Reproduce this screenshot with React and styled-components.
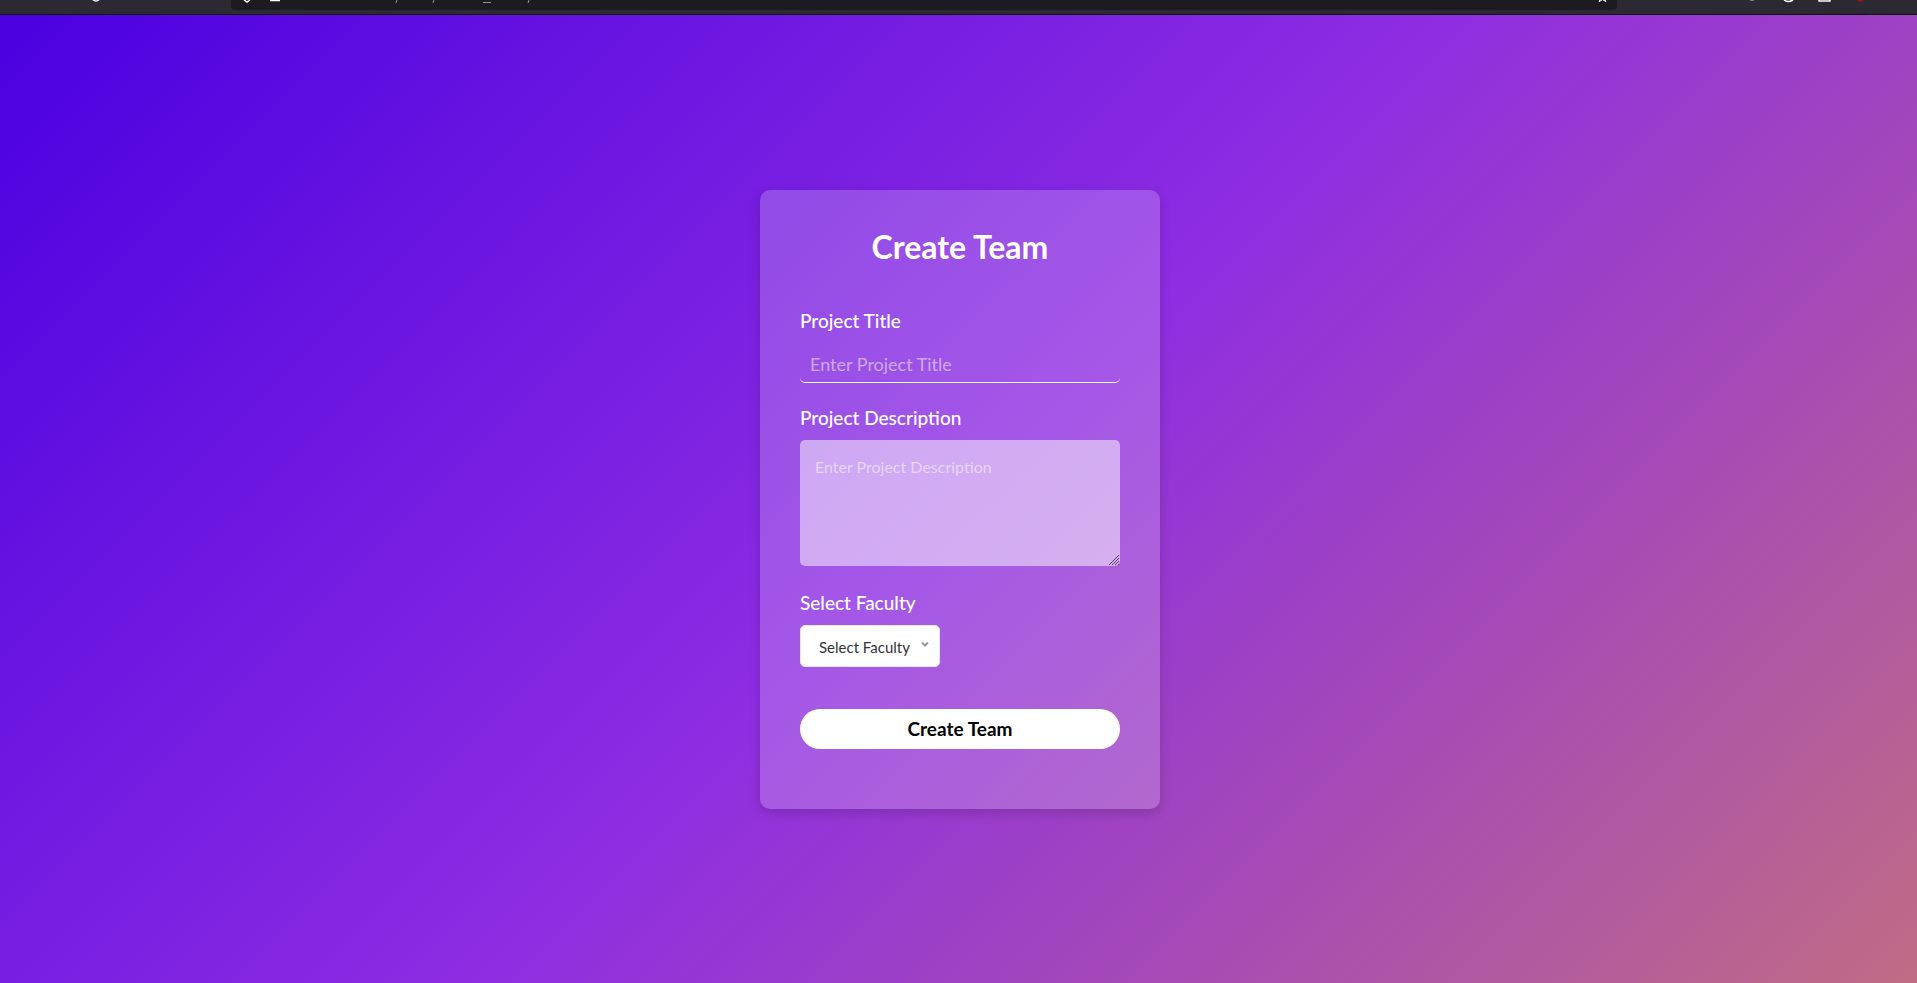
import React from "react";
import styled, { createGlobalStyle } from "styled-components";

const GlobalStyle = createGlobalStyle`
  * { box-sizing: border-box; }
  body { margin: 0; font-family: Lato, "Open Sans", sans-serif; }
`;

const Page = styled.div`
  display: flex;
  flex-direction: column;
  min-height: 100vh;
`;

const BrowserBar = styled.header`
  display: flex;
  align-items: flex-start;
  height: 15px;
  padding: 0 300px 0 231px;
  overflow: hidden;
  background: #2b2a33;
  border-bottom: 1px solid #0c0c0d;
  position: relative;
`;

const AddressField = styled.div`
  flex: 1;
  height: 10px;
  border-radius: 0 0 4px 4px;
  background: #1c1b22;
`;

const BarMarks = styled.svg`
  position: absolute;
  top: 0;
  left: ${(p) => (p.$end ? "auto" : "0")};
  right: ${(p) => (p.$end ? "0" : "auto")};
`;

const Stage = styled.main`
  flex: 1;
  display: flex;
  align-items: center;
  justify-content: center;
  padding: 20px 20px 20px 23px;
  background: linear-gradient(135deg, #4a00e0, #8e2de2, #c06c84);
`;

const Card = styled.form`
  width: 100%;
  max-width: 400px;
  padding: 40px 40px 60px;
  border-radius: 10px;
  background: rgba(255, 255, 255, 0.2);
  box-shadow: 0 4px 12px rgba(0, 0, 0, 0.16);
`;

const Title = styled.h1`
  margin: 0 0 42px;
  color: #fff;
  font-size: 32px;
  font-weight: 700;
  line-height: 34px;
  text-align: center;
`;

const Field = styled.div`
  display: flex;
  flex-direction: column;
  align-items: stretch;
  gap: 8px;
  margin-bottom: 20px;
`;

const Label = styled.label`
  color: #fff;
  font-size: 19px;
  font-weight: 500;
  line-height: 29px;
`;

const TextInput = styled.input`
  height: 40px;
  padding: 12px 10px 8px;
  border: 0;
  border-bottom: 1px solid #fff;
  border-radius: 5px;
  outline: 0;
  background: transparent;
  color: #fff;
  font: 18px Lato, sans-serif;
  &::placeholder { color: rgba(255, 255, 255, 0.5); }
`;

const AreaWrap = styled.div`
  position: relative;
  padding-bottom: 2px;
`;

const TextArea = styled.textarea`
  display: block;
  width: 100%;
  height: 126px;
  padding: 15px;
  border: 0;
  border-radius: 5px;
  outline: 0;
  background: rgba(255, 255, 255, 0.5);
  color: #fff;
  font: 16px/24px Lato, sans-serif;
  resize: vertical;
  &::placeholder { color: rgba(255, 255, 255, 0.5); }
  &::-webkit-resizer { background: transparent; }
`;

const Grip = styled.svg`
  position: absolute;
  right: 1px;
  bottom: 3px;
  pointer-events: none;
`;

const SelectWrap = styled.div`
  position: relative;
  width: 140px;
`;

const Select = styled.select`
  display: block;
  width: 100%;
  height: 42px;
  padding: 2px 28px 0 18px;
  appearance: none;
  border: 1px solid #e8e8e8;
  border-radius: 5px;
  background: #fff;
  color: #333;
  font: 15px Lato, sans-serif;
`;

const Chevron = styled.svg`
  position: absolute;
  right: 11px;
  top: 16px;
  pointer-events: none;
`;

const SubmitButton = styled.button`
  display: block;
  width: 100%;
  height: 40px;
  margin-top: 42px;
  padding: 0;
  border: 0;
  border-radius: 20px;
  background: #fff;
  color: #000;
  font: 700 19px Lato, sans-serif;
  cursor: pointer;
`;

export default function App() {
  return (
    <Page>
      <GlobalStyle />
      <BrowserBar>
        <BarMarks width="560" height="10" aria-hidden="true">
          <path d="M93 0 Q96 2 99 0" fill="none" stroke="#fbfbfe" strokeWidth="1.5" />
          <path d="M244 0 L247 2 L250 0" fill="none" stroke="#fbfbfe" strokeWidth="1.5" />
          <path d="M270 .5 H280" stroke="#fbfbfe" strokeWidth="1.5" />
          <path d="M397 0 L396 3 M434 0 L433 3 M529 0 L528 3 M483 2.5 H491" stroke="#8f8f9d" />
        </BarMarks>
        <AddressField />
        <BarMarks $end width="330" height="10" aria-hidden="true">
          <path d="M13 0 L12 1.5 L15 0 M16 0 L19 1.5 L18 0" fill="none" stroke="#fbfbfe" />
          <path d="M163 0 Q165 1 167 0" fill="none" stroke="#8f8f9d" />
          <path d="M197 0 Q201 3 206 0" fill="none" stroke="#fbfbfe" strokeWidth="1.5" />
          <path d="M232 0 V1 H243 V0" fill="none" stroke="#fbfbfe" strokeWidth="1.5" />
          <path d="M270 0 Q273 4 277 0Z" fill="#9b1418" />
        </BarMarks>
      </BrowserBar>
      <Stage>
        <Card onSubmit={(e) => e.preventDefault()}>
          <Title>Create Team</Title>
          <Field>
            <Label htmlFor="title">Project Title</Label>
            <TextInput id="title" type="text" placeholder="Enter Project Title" />
          </Field>
          <Field>
            <Label htmlFor="description">Project Description</Label>
            <AreaWrap>
              <TextArea id="description" placeholder="Enter Project Description" />
              <Grip width="10" height="10" aria-hidden="true">
                <path d="M0 10 L10 0 M3 10 L10 3 M6 10 L10 6 M9 10 L10 9" stroke="#4c4356" />
              </Grip>
            </AreaWrap>
          </Field>
          <Field>
            <Label htmlFor="faculty">Select Faculty</Label>
            <SelectWrap>
              <Select id="faculty" defaultValue="">
                <option value="">Select Faculty</option>
              </Select>
              <Chevron width="8" height="8" aria-hidden="true">
                <path d="M1 1.5 L4 4.5 L7 1.5" fill="none" stroke="#999" strokeWidth="2" />
              </Chevron>
            </SelectWrap>
          </Field>
          <SubmitButton type="submit">Create Team</SubmitButton>
        </Card>
      </Stage>
    </Page>
  );
}
